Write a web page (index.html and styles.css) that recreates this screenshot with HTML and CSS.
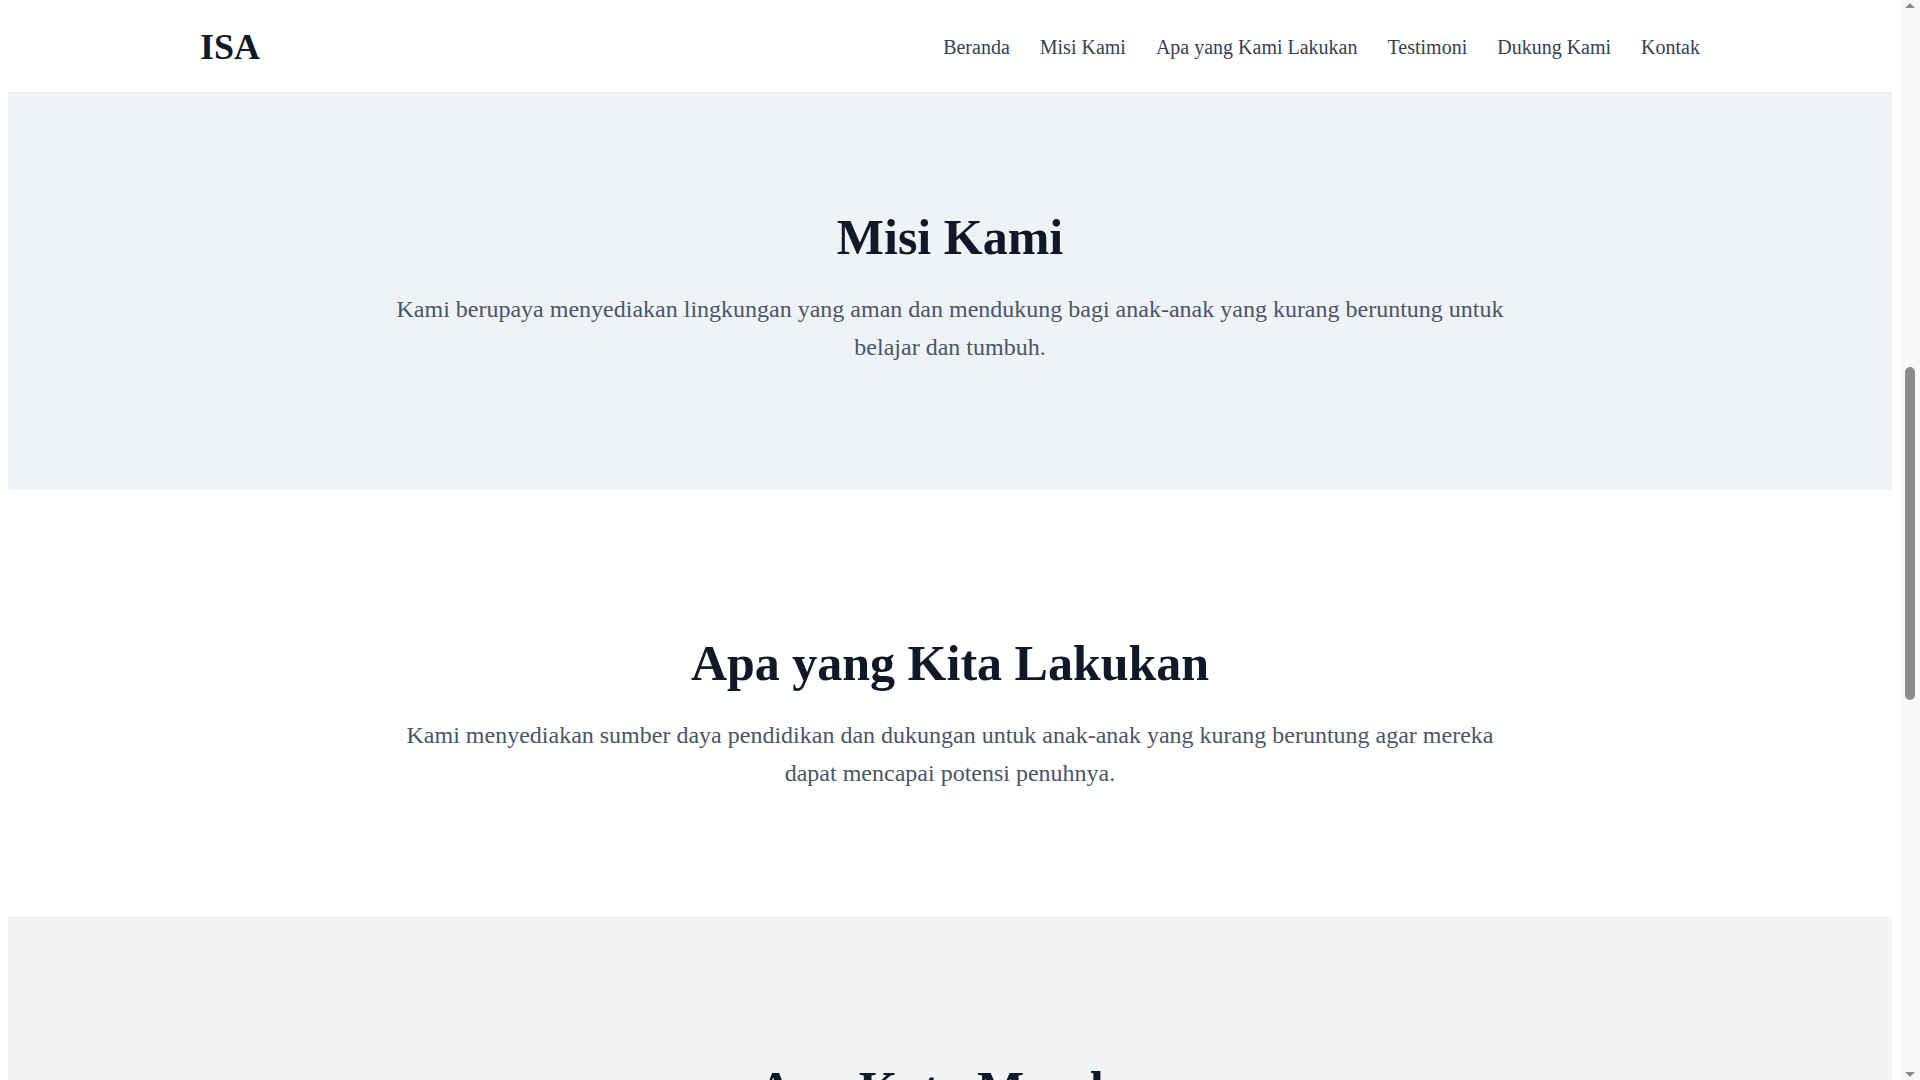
FILE: index.html
```html
<!DOCTYPE html>
<html lang="id">
<head>
<meta charset="utf-8">
<title>ISA</title>
<link rel="stylesheet" href="styles.css">
</head>
<body>
<div class="page">
  <header class="site-header">
    <div class="container header-inner">
      <a class="logo" href="#beranda">ISA</a>
      <nav class="nav">
        <a href="#beranda">Beranda</a>
        <a href="#misi">Misi Kami</a>
        <a href="#kegiatan">Apa yang Kami Lakukan</a>
        <a href="#testimoni">Testimoni</a>
        <a href="#dukung">Dukung Kami</a>
        <a href="#kontak">Kontak</a>
      </nav>
    </div>
  </header>

  <main>
    <section class="section section-blue section-first" id="misi">
      <div class="container narrow">
        <h2 class="section-title">Misi Kami</h2>
        <p class="section-text">Kami berupaya menyediakan lingkungan yang aman dan mendukung bagi anak-anak yang kurang beruntung untuk belajar dan tumbuh.</p>
      </div>
    </section>

    <section class="section" id="kegiatan">
      <div class="container narrow">
        <h2 class="section-title">Apa yang Kita Lakukan</h2>
        <p class="section-text">Kami menyediakan sumber daya pendidikan dan dukungan untuk anak-anak yang kurang beruntung agar mereka dapat mencapai potensi penuhnya.</p>
      </div>
    </section>

    <section class="section section-gray" id="testimoni">
      <div class="container narrow">
        <h2 class="section-title">Apa Kata Mereka</h2>
      </div>
    </section>
  </main>
</div>

<aside class="scrollbar" aria-hidden="true">
  <span class="sb-arrow sb-up"></span>
  <div class="sb-track"><div class="sb-thumb"></div></div>
  <span class="sb-arrow sb-down"></span>
</aside>
</body>
</html>
```

FILE: styles.css
```css
body {
  margin: 0;
  display: flex;
  align-items: flex-start;
  background: #ffffff;
  font-family: "Liberation Serif", "Times New Roman", serif;
  color: #111827;
}

.page {
  flex: 1;
  min-width: 0;
  margin: 0 8px 8px;
}

.container {
  max-width: 1500px;
  margin: 0 auto;
}

.narrow {
  max-width: 1120px;
  text-align: center;
}

/* Header */
.site-header {
  height: 93px;
  box-sizing: border-box;
  padding-top: 2px;
  background: #ffffff;
  border-bottom: 1px solid #e5e7eb;
}

.header-inner {
  height: 100%;
  display: flex;
  align-items: center;
  justify-content: space-between;
}

.logo {
  font-size: 36px;
  font-weight: 700;
  color: #111827;
  text-decoration: none;
}

.nav {
  display: flex;
  gap: 30px;
}

.nav a {
  font-size: 20px;
  color: #374151;
  text-decoration: none;
}

/* Sections */
.section {
  box-sizing: border-box;
  height: 426px;
  padding: 148px 0 123px;
}

.section-first {
  height: 397px;
  padding-top: 119px;
}

.section-blue {
  background: #eff3f8;
}

.section-gray {
  background: #f3f4f6;
}

.section-title {
  margin: 0 0 28px;
  font-size: 50px;
  line-height: 1;
  font-weight: 700;
  color: #111827;
}

.section-text {
  margin: 0;
  font-size: 24px;
  line-height: 1.6;
  color: #4b5563;
}

/* Window scrollbar */
.scrollbar {
  flex: 0 0 20px;
  height: 100vh;
  position: sticky;
  top: 0;
  display: flex;
  flex-direction: column;
  align-items: center;
  background: #f9f9f9;
}

.sb-arrow {
  width: 0;
  height: 0;
  border-left: 5px solid transparent;
  border-right: 5px solid transparent;
}

.sb-up {
  margin-top: 3px;
  border-bottom: 5px solid #8b8b8b;
}

.sb-down {
  margin-bottom: 3px;
  border-top: 5px solid #8b8b8b;
}

.sb-track {
  flex: 1;
  padding-top: 359px;
}

.sb-thumb {
  width: 10px;
  height: 333px;
  border-radius: 5px;
  background: #8b8b8b;
}
```
